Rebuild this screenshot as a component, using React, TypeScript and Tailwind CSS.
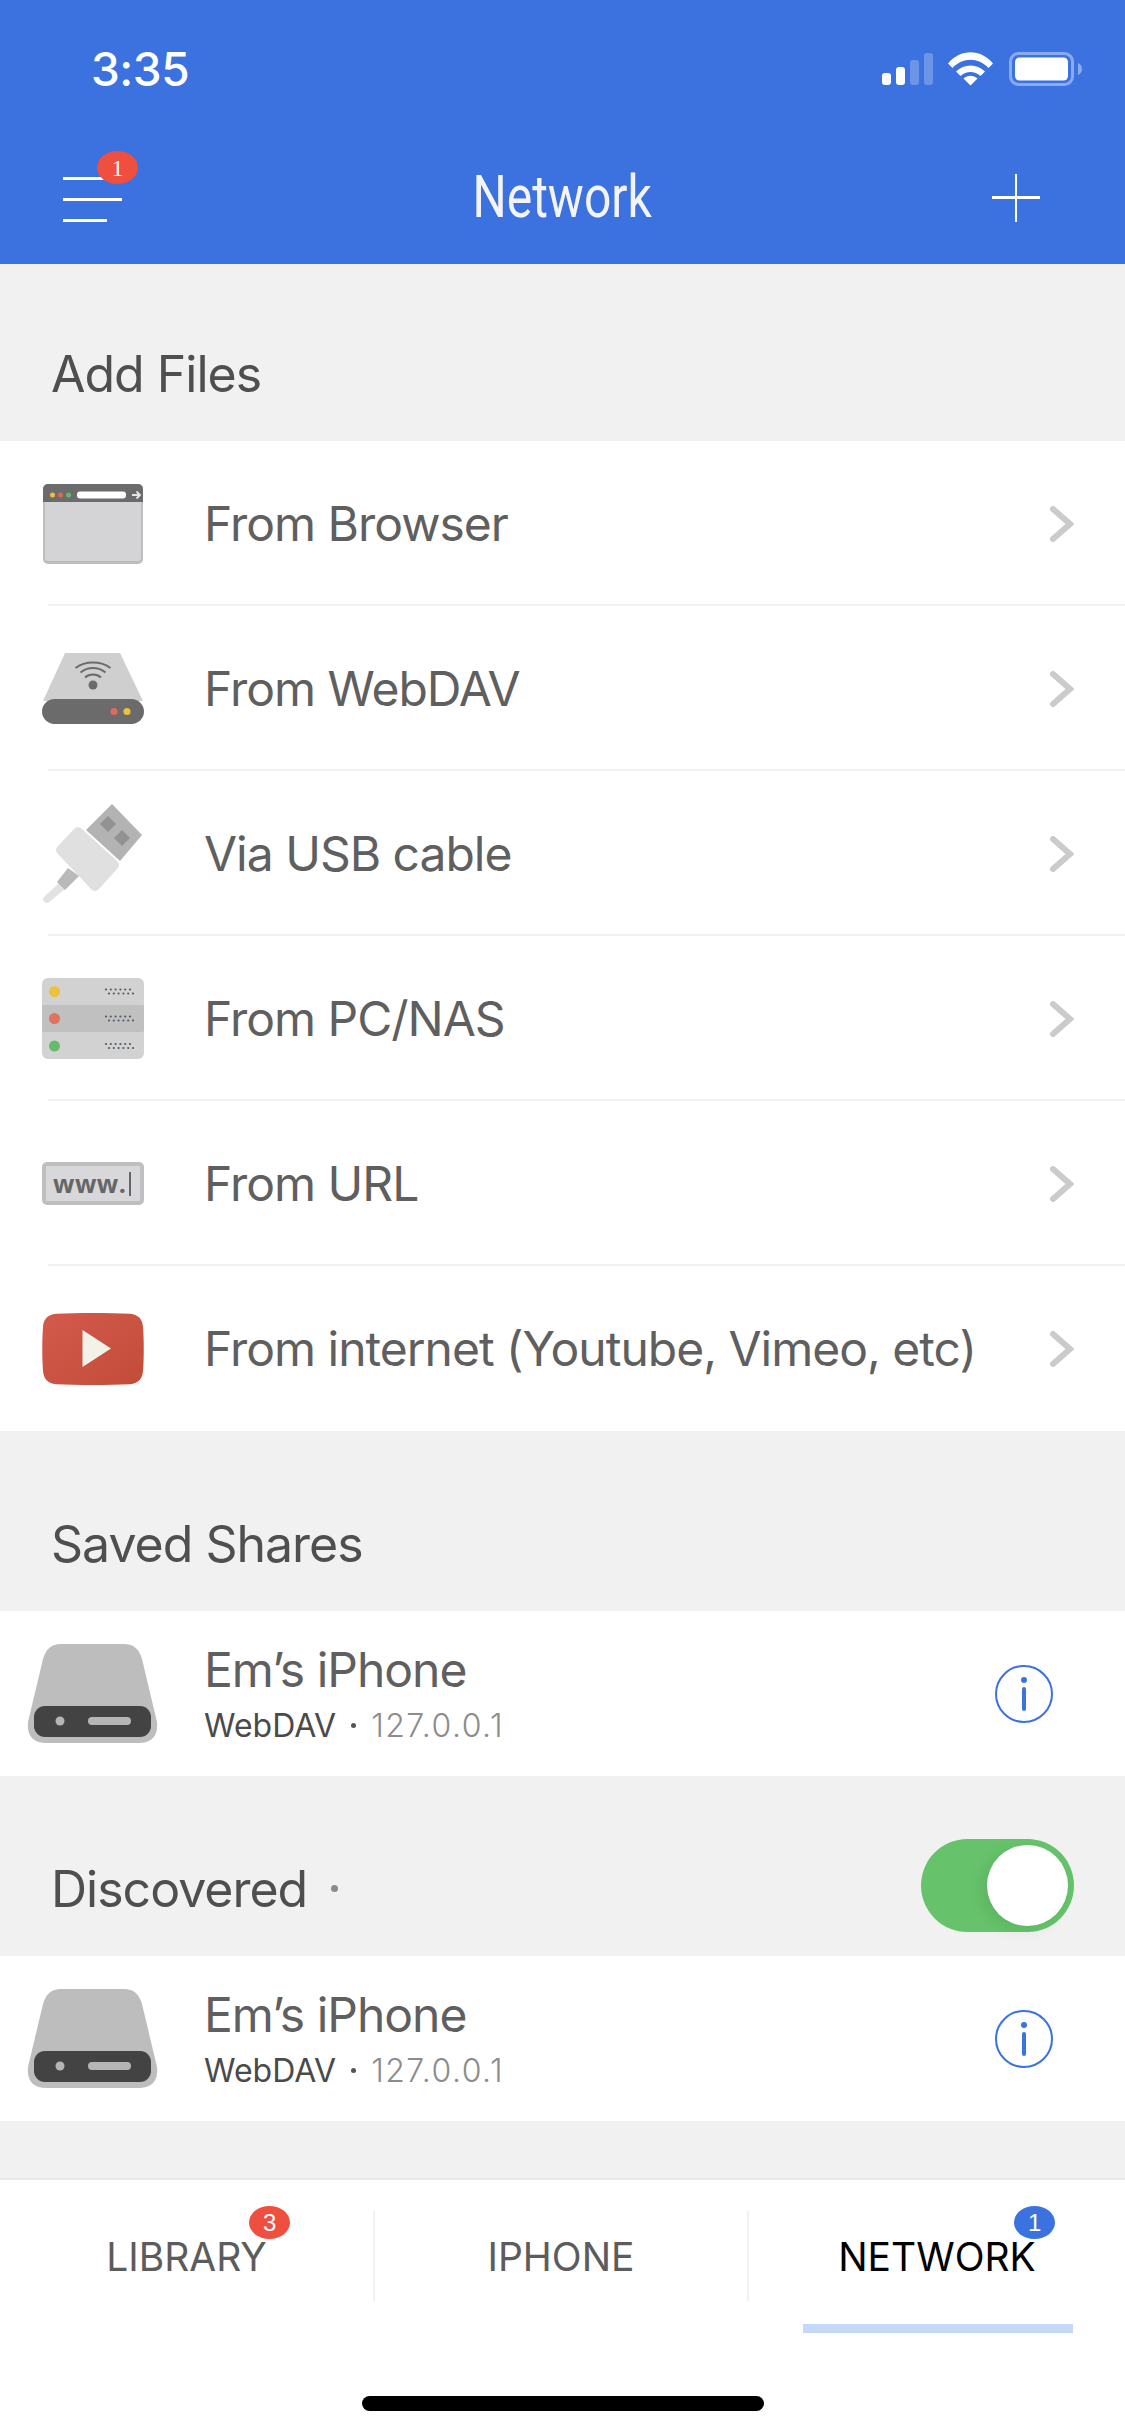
import type { ReactNode } from "react";

const BLUE = "#3b72e0";

function SignalIcon() {
  return (
    <svg width="51" height="34" viewBox="0 0 51 34" className="mr-[15px]">
      <rect x="0" y="21" width="9" height="12" rx="3" fill="#fff" />
      <rect x="14" y="15" width="9" height="18" rx="3" fill="#fff" />
      <rect x="28" y="8" width="9" height="25" rx="3" fill="#fff" fillOpacity=".25" />
      <rect x="42" y="1" width="9" height="32" rx="3" fill="#fff" fillOpacity=".25" />
    </svg>
  );
}

function WifiIcon() {
  return (
    <svg width="45" height="34" viewBox="0 0 45 34" className="mr-[16px]">
      <path d="M0 11.500C12.500 -3.500 32.500 -3.500 45 11.500L40.500 16C30.500 5 14.500 5 4.500 16Z" fill="#fff" />
      <path d="M8 19.500C16 11.500 29 11.500 37 19.500L32.500 24C26.500 18.500 18.500 18.500 12.500 24Z" fill="#fff" />
      <path d="M15.500 26.500C20 22.800 25 22.800 29.500 26.500L22.500 33.500Z" fill="#fff" />
    </svg>
  );
}

function BatteryIcon() {
  return (
    <svg width="73" height="34" viewBox="0 0 73 34">
      <rect x="1.500" y="1.500" width="62" height="31" rx="8" fill="none" stroke="#fff" strokeOpacity=".4" strokeWidth="3" />
      <rect x="6" y="5.500" width="53" height="23" rx="4.500" fill="#fff" />
      <path d="M69 11C71.500 12 73 14 73 17S71.500 22 69 23Z" fill="#fff" fillOpacity=".4" />
    </svg>
  );
}

function BrowserIcon() {
  return (
    <svg width="102" height="80" viewBox="0 0 102 80">
      <rect x="1" y="0" width="100" height="80" rx="5" fill="#bdbdbd" />
      <rect x="3" y="10" width="96" height="67" rx="3" fill="#d4d4d6" />
      <path d="M1 18V5a5 5 0 0 1 5-5h90a5 5 0 0 1 5 5v13Z" fill="#6b6b6b" />
      <circle cx="10.500" cy="11" r="2.500" fill="#e8c13e" />
      <circle cx="18.500" cy="11" r="2.500" fill="#d9694f" />
      <circle cx="26.500" cy="11" r="2.500" fill="#66b96a" />
      <rect x="35" y="7.500" width="49" height="7" rx="3" fill="#fff" />
      <path d="M90 11h8M94.500 7.500 98 11l-3.500 3.500" fill="none" stroke="#e6e6e6" strokeWidth="1.800" />
    </svg>
  );
}

function WebdavIcon() {
  return (
    <svg width="102" height="72" viewBox="0 0 102 72">
      <path d="M23 0H78L101 48H1Z" fill="#cfcfcf" />
      <rect x="0" y="46" width="102" height="25" rx="12.500" fill="#6b6b6b" />
      <circle cx="72" cy="58.500" r="3.600" fill="#e0695a" />
      <circle cx="85" cy="58.500" r="3.600" fill="#eac23e" />
      <circle cx="51" cy="32" r="4.500" fill="#6b6b6b" />
      <path d="M43 24.500C47.500 20.500 54.500 20.500 59 24.500" fill="none" stroke="#6b6b6b" strokeWidth="2" />
      <path d="M38.500 19.500C45.500 13.500 56.500 13.500 63.500 19.500" fill="none" stroke="#6b6b6b" strokeWidth="2" />
      <path d="M33.500 15C43 7.500 59 7.500 68.500 15" fill="none" stroke="#6b6b6b" strokeWidth="2" />
    </svg>
  );
}

function UsbIcon() {
  return (
    <svg width="102" height="100" viewBox="0 0 102 100">
      <path d="M17 79 23 85 6 99Q1 99 1 94Z" fill="#e2e2e2" />
      <path d="M26 64 37 72 23 86 15 78Z" fill="#b9b9b9" />
      <path d="M70 0 100 31 78 57 44 26Z" fill="#b3b3b3" />
      <path d="M66 12 74 20 66 28 58 20Z" fill="#929292" />
      <path d="M80 26 88 34 80 42 72 34Z" fill="#929292" />
      <path d="M32 25Q36 21 40 25L75 57Q79 61 75 65L57 85Q53 89 49 85L16 50Q12 46 16 42Z" fill="#e0e0e0" />
    </svg>
  );
}

function ServerIcon() {
  const rows = [
    { y: 0, dot: "#e9c33f", cy: 13.500, band: false },
    { y: 27, dot: "#e0725f", cy: 40.500, band: true },
    { y: 54, dot: "#67ba6d", cy: 68, band: false },
  ];
  return (
    <svg width="102" height="81" viewBox="0 0 102 81">
      <rect x="0" y="0" width="102" height="81" rx="6" fill="#d2d2d2" />
      {rows.map((r) => (
        <g key={r.cy}>
          {r.band && <rect x="0" y={r.y} width="102" height="27" rx="2" fill="#c0c0c0" />}
          <circle cx="12.500" cy={r.cy} r="5.500" fill={r.dot} />
          {[0, 1, 2, 3, 4, 5].map((i) => (
            <circle key={i} cx={64 + i * 4.800} cy={r.cy - 2} r="1.100" fill="#4f5a68" />
          ))}
          {[0, 1, 2, 3, 4, 5].map((i) => (
            <circle key={i} cx={67 + i * 4.800} cy={r.cy + 2} r="1.100" fill="#4f5a68" />
          ))}
        </g>
      ))}
    </svg>
  );
}

function WwwIcon() {
  return (
    <div className="flex h-[43px] w-[102px] items-center rounded-[5px] border-[4px] border-[#bfbfbf] bg-[#d8d8da] pl-[7px] font-['Open_Sans'] text-[25px] font-bold leading-none tracking-[0.5px] text-[#666666]">
      www.
      <span className="ml-[3px] h-[24px] w-[2px] bg-[#666666]" />
    </div>
  );
}

function YoutubeIcon() {
  return (
    <svg width="102" height="72" viewBox="0 0 102 72">
      <defs>
        <linearGradient id="yt" x1="0" y1="0" x2="1" y2="1">
          <stop offset="0" stopColor="#d35a4d" />
          <stop offset="1" stopColor="#c24c38" />
        </linearGradient>
      </defs>
      <path d="M14 .8C35-.2 67-.2 88 .8 96 1.500 100.500 6 101 14c1 13 1 31 0 44-.5 8-5 12.500-13 13.200-21 1-53 1-74 0C6 70.500 1.500 66 1 58 0 45 0 27 1 14 1.500 6 6 1.500 14 .8Z" fill="url(#yt)" />
      <path d="M40.500 17 69 35.500 40.500 54Z" fill="#f3f2e8" />
    </svg>
  );
}

function DriveIcon() {
  return (
    <svg width="131" height="100" viewBox="0 0 131 100">
      <path d="M34 0H97Q111 0 115 15L130 78Q132 99 111 99H20Q-1 99 1 78L16 15Q20 0 34 0Z" fill="#bdbdbd" />
      <rect x="7" y="62" width="117" height="31" rx="11" fill="#434343" />
      <circle cx="33" cy="77" r="4.500" fill="#b5b5b5" />
      <rect x="61" y="73" width="43" height="8" rx="4" fill="#b5b5b5" />
    </svg>
  );
}

function InfoIcon() {
  return (
    <svg width="58" height="58" viewBox="0 0 58 58">
      <circle cx="29" cy="29" r="28" fill="none" stroke={BLUE} strokeWidth="2" />
      <circle cx="29" cy="15" r="3" fill={BLUE} />
      <rect x="27" y="22" width="4" height="24" rx="2" fill={BLUE} />
    </svg>
  );
}

function Chevron() {
  return (
    <svg width="24" height="36" viewBox="0 0 24 36" className="mr-[51px]">
      <path d="M3 3 20 18 3 33" fill="none" stroke="#cbcbcb" strokeWidth="6" strokeLinecap="round" strokeLinejoin="miter" />
    </svg>
  );
}

function Badge({ color, value, className }: { color: string; value: string; className: string }) {
  return (
    <span
      className={`absolute flex h-[33px] w-[41px] items-center justify-center rounded-[50%] font-['Liberation_Sans'] text-[24px] font-light leading-none tracking-normal text-white ${className}`}
      style={{ background: color }}
    >
      {value}
    </span>
  );
}

function AddRow({ icon, label, last }: { icon: ReactNode; label: string; last?: boolean }) {
  return (
    <div className="relative flex h-[165px] items-center bg-white">
      <div className="flex w-[204px] justify-start pl-[42px]">{icon}</div>
      <span className="flex-1 text-[48px] tracking-[-1px] text-[#5f5f5f]">{label}</span>
      <Chevron />
      {!last && <div className="absolute bottom-0 left-[48px] right-0 h-[2px] bg-[#f1f1f1]" />}
    </div>
  );
}

function SectionHeader({ title, className, children }: { title: string; className: string; children?: ReactNode }) {
  return (
    <div className={`flex shrink-0 items-end bg-[#f1f1f1] pb-[35px] pl-[51px] pr-[51px] text-[50px] leading-[64px] tracking-[-1px] text-[#4f4f4f] ${className}`}>
      <span>{title}</span>
      {children}
    </div>
  );
}

function ShareRow() {
  return (
    <div className="flex h-[165px] items-center bg-white pl-[27px] pr-[72px]">
      <DriveIcon />
      <div className="ml-[46px] flex-1">
        <div className="text-[48px] leading-[56px] tracking-[-1px] text-[#5f5f5f]">Em’s iPhone</div>
        <div className="mt-[8px] flex items-center text-[32px] leading-[40px]">
          <span className="text-[#4a4a4a]">WebDAV</span>
          <span className="mx-[15px] h-[5px] w-[5px] rounded-full bg-[#555555]" />
          <span className="font-light tracking-[1.5px] text-[#8c8c8c]">127.0.0.1</span>
        </div>
      </div>
      <InfoIcon />
    </div>
  );
}

function Tab({ label, active, children }: { label: string; active?: boolean; children?: ReactNode }) {
  return (
    <div className="relative flex flex-1 justify-center">
      <span className={`relative font-['Inter'] text-[39px] leading-[44px] ${active ? "text-black" : "text-[#5c5c5c]"}`}>
        {label}
        {children}
      </span>
    </div>
  );
}

export default function App() {
  return (
    <div className="flex h-[2436px] w-[1125px] flex-col overflow-hidden bg-[#f1f1f1] font-['Inter',sans-serif]">
      <header className="h-[264px] shrink-0 bg-[#3b72e0] text-white">
        <div className="flex h-[138px] items-start pr-[43px] pl-[91px] pt-[52px]">
          <span className="flex-1 text-[46px] font-medium leading-[34px] tracking-[-0.5px]">3:35</span>
          <SignalIcon />
          <WifiIcon />
          <BatteryIcon />
        </div>
        <div className="flex h-[126px] items-start justify-between pl-[63px] pr-[85px]">
          <div className="relative mt-[39px] flex w-[59px] flex-col gap-[18px]">
            <span className="h-[3px] w-[59px] bg-white" />
            <span className="h-[3px] w-[59px] bg-white" />
            <span className="h-[3px] w-[44px] bg-white" />
            <Badge color="#ee4f3e" value="1" className="left-[34px] top-[-26px] font-['Liberation_Serif']" />
          </div>
          <span className="ml-[10px] mt-[24px] origin-center scale-x-[0.8] font-['Roboto'] text-[60px] font-normal leading-[70px] text-[#f4f4f4]">Network</span>
          <div className="relative mt-[36px] h-[48px] w-[48px]">
            <span className="absolute left-0 top-[22px] h-[3px] w-[48px] bg-white" />
            <span className="absolute left-[23px] top-0 h-[48px] w-[2px] bg-white" />
          </div>
        </div>
      </header>

      <SectionHeader title="Add Files" className="h-[177px]" />
      <AddRow icon={<BrowserIcon />} label="From Browser" />
      <AddRow icon={<WebdavIcon />} label="From WebDAV" />
      <AddRow icon={<UsbIcon />} label="Via USB cable" />
      <AddRow icon={<ServerIcon />} label="From PC/NAS" />
      <AddRow icon={<WwwIcon />} label="From URL" />
      <AddRow icon={<YoutubeIcon />} label="From internet (Youtube, Vimeo, etc)" last />

      <SectionHeader title="Saved Shares" className="h-[180px]" />
      <ShareRow />

      <SectionHeader title="Discovered" className="h-[180px]">
        <span className="mb-[29px] ml-[24px] h-[7px] w-[7px] rounded-full bg-[#8a8a8a]" />
        <div className="mb-[-11px] ml-auto flex h-[93px] w-[153px] items-center justify-end rounded-full bg-[#66c36b] pr-[6px]">
          <span className="h-[81px] w-[81px] rounded-full bg-white shadow-[-6px_4px_16px_rgba(0,0,0,0.08)]" />
        </div>
      </SectionHeader>
      <ShareRow />

      <div className="flex-1" />

      <nav className="relative h-[258px] shrink-0 border-t-2 border-[#e9e9e9] bg-white">
        <div className="mt-[31px] flex h-[90px] items-start divide-x-2 divide-[#f1f1f1]">
          <div className="flex h-[90px] w-[375px] pt-[24px]">
            <Tab label="LIBRARY">
              <Badge color="#ee4f3e" value="3" className="left-[143px] top-[-29px]" />
            </Tab>
          </div>
          <div className="flex h-[90px] w-[374px] pt-[24px]">
            <Tab label="IPHONE" />
          </div>
          <div className="flex h-[90px] w-[376px] pt-[24px]">
            <Tab label="NETWORK" active>
              <Badge color={BLUE} value="1" className="left-[176px] top-[-29px]" />
            </Tab>
          </div>
        </div>
        <div className="ml-[803px] mt-[23px] h-[9px] w-[270px] bg-[#c4d8f7]" />
        <div className="mx-auto mt-[63px] h-[15px] w-[402px] rounded-full bg-black" />
      </nav>
    </div>
  );
}
